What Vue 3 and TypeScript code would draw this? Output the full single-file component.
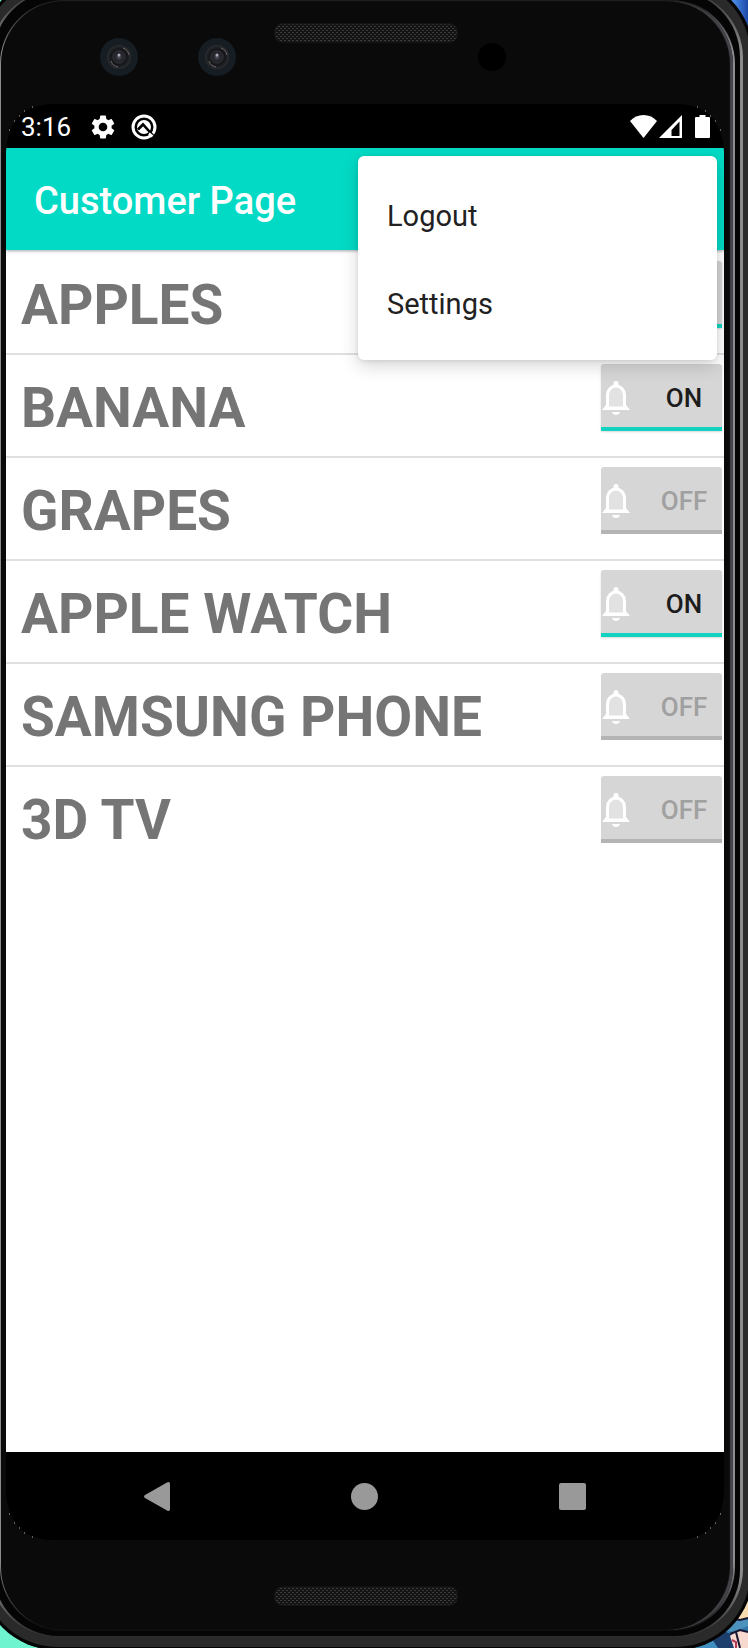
<script setup lang="ts">
import { ref } from 'vue'

interface Product {
  name: string
  notify: boolean
}

const products = ref<Product[]>([
  { name: 'APPLES', notify: true },
  { name: 'BANANA', notify: true },
  { name: 'GRAPES', notify: false },
  { name: 'APPLE WATCH', notify: true },
  { name: 'SAMSUNG PHONE', notify: false },
  { name: '3D TV', notify: false },
])

const menuItems: string[] = ['Logout', 'Settings']
const corners: string[] = ['tl', 'tr', 'bl', 'br']
</script>

<template>
  <div class="stage">
    <svg class="wallpaper" viewBox="0 0 60 60" aria-hidden="true">
      <rect width="60" height="60" fill="#2f74a8" />
      <path d="M0 44h24l6 8h16l6 8H0z" fill="#3f8fc0" />
      <path d="M26 30l12 4 12-4 10 2v6l-14 6-12-2z" fill="#4b93bd" />
      <path d="M22 48l12-6 8 4 4 14H30z" fill="#1c3f6e" />
      <path d="M46 10h14v20l-8 2-6-6z" fill="#f6dcae" />
      <path d="M42 48l8-6 10 2v16H46z" fill="#f7d9d0" />
      <path d="M40 30l12 2 8-2M42 46l10-4 8 2M48 44l4 16" stroke="#191631" stroke-width="2" fill="none" />
      <path d="M44 52l4 2v6" stroke="#b8385a" stroke-width="2" fill="none" />
    </svg>
    <div class="shell" aria-hidden="true">
      <div class="shell-edge">
        <div class="shell-gap">
          <div class="shell-line">
            <div class="shell-glass"></div>
          </div>
        </div>
      </div>
    </div>

    <div class="phone">
      <svg class="hardware" viewBox="0 0 748 104" aria-hidden="true">
        <defs>
          <pattern id="mesh" width="4" height="4" patternUnits="userSpaceOnUse">
            <rect width="4" height="4" fill="#131313" />
            <rect width="2" height="1" fill="#3c3c3c" />
            <rect x="2" y="2" width="2" height="1" fill="#3c3c3c" />
          </pattern>
          <radialGradient id="lens">
            <stop offset="0" stop-color="#5a5a66" />
            <stop offset=".25" stop-color="#2a2a31" />
            <stop offset=".65" stop-color="#15161a" />
            <stop offset="1" stop-color="#2b2d31" />
          </radialGradient>
        </defs>
        <rect x="275" y="24" width="182" height="18" rx="7" fill="url(#mesh)" stroke="#1c1c1c" />
        <g v-for="cx in [119, 217]" :key="cx">
          <circle :cx="cx" cy="57" r="19" fill="#161d23" />
          <circle :cx="cx" cy="57" r="12" fill="url(#lens)" />
          <path :d="`M${cx - 8} 61a9 9 0 0 0 7 6M${cx + 4} 48a9 9 0 0 1 6 7`" stroke="#6b6560" stroke-width="1" fill="none" />
          <circle :cx="cx" cy="57" r="6" fill="none" stroke="#34343a" />
          <circle :cx="cx" cy="55" r="1.5" fill="#a9a9b8" />
        </g>
        <circle cx="492" cy="57" r="14" fill="#000" />
      </svg>

      <div class="screen">
        <header class="status">
          <span class="time">3:16</span>
          <svg class="gear" viewBox="2 2 20 20" role="img" aria-label="Settings">
            <path fill="#fff" d="M19.14 12.94c.04-.3.06-.61.06-.94 0-.32-.02-.64-.07-.94l2.03-1.58a.49.49 0 0 0 .12-.61l-1.92-3.32a.49.49 0 0 0-.59-.22l-2.39.96c-.5-.38-1.03-.7-1.62-.94l-.36-2.54a.48.48 0 0 0-.48-.41h-3.84c-.24 0-.43.17-.47.41l-.36 2.54c-.59.24-1.13.57-1.62.94l-2.39-.96a.48.48 0 0 0-.59.22L2.74 8.87c-.12.21-.08.47.12.61l2.03 1.58c-.05.3-.09.63-.09.94s.02.64.07.94l-2.03 1.58a.49.49 0 0 0-.12.61l1.92 3.32c.12.22.37.29.59.22l2.39-.96c.5.38 1.03.7 1.62.94l.36 2.54c.05.24.24.41.48.41h3.84c.24 0 .44-.17.47-.41l.36-2.54c.59-.24 1.13-.56 1.62-.94l2.39.96c.22.08.47 0 .59-.22l1.92-3.32a.48.48 0 0 0-.12-.61zM12 15.6a3.6 3.6 0 1 1 0-7.2 3.6 3.6 0 0 1 0 7.2z" />
          </svg>
          <svg class="debug" viewBox="0 0 26 26" role="img" aria-label="System notification">
            <circle cx="13" cy="13" r="11" fill="none" stroke="#fff" stroke-width="3" />
            <circle cx="13" cy="13" r="7" fill="#fff" />
            <path d="M7 15.500l5-5 10 11" fill="none" stroke="#000" stroke-width="2.600" />
            <path d="M19 19l4.500 4.500" stroke="#000" stroke-width="2" />
            <path d="M18 19.500l3.500 3" stroke="#fff" stroke-width="2.500" />
          </svg>
          <div class="signals">
            <svg class="wifi" viewBox="0 0 27 23" role="img" aria-label="Wi-Fi">
              <path d="M0 6Q5.500 0 13.500 0T27 6L13.500 23z" fill="#fff" />
            </svg>
            <svg class="cell" viewBox="0 0 23 23" role="img" aria-label="Mobile signal">
              <path fill="#fff" fill-rule="evenodd" d="M0 23L23 0v23zM12.500 21h8V6.500l-8 8.500z" />
            </svg>
            <svg class="battery" viewBox="0 0 15 23" role="img" aria-label="Battery">
              <path fill="#fff" d="M4.500 0h6v2H14q1 0 1 1v19q0 1-1 1H1q-1 0-1-1V3q0-1 1-1h3.500z" />
            </svg>
          </div>
        </header>

        <div class="app">
          <div class="appbar">
            <h1>Customer Page</h1>
          </div>

          <ul class="products">
            <li v-for="p in products" :key="p.name">
              <span class="name">{{ p.name }}</span>
              <button
                type="button"
                class="toggle"
                :class="{ on: p.notify }"
                :aria-pressed="p.notify"
                :aria-label="`Notify about ${p.name}`"
                @click="p.notify = !p.notify"
              >
                <svg class="bell" viewBox="0 0 28 34" aria-hidden="true">
                  <path d="M5.500 27V14a8.500 9 0 0 1 17 0v13z" fill="#e2e2e2" stroke="#fff" stroke-width="3" />
                  <path d="M11.500 5V2.500a2.500 2.500 0 0 1 5 0V5zM0 29l4-5h3v2h14v-2h3l4 5zM10 31h8q-1 3-4 3t-4-3z" fill="#fff" />
                </svg>
                <span class="state">{{ p.notify ? 'ON' : 'OFF' }}</span>
              </button>
            </li>
          </ul>

          <div class="menu" role="menu">
            <button v-for="m in menuItems" :key="m" type="button" role="menuitem">{{ m }}</button>
          </div>
        </div>

        <nav class="navbar">
          <button type="button" aria-label="Back">
            <svg viewBox="0 0 29 29"><path d="M2 13Q0 14.500 2 16L24 28.500Q27 30 27 27V2Q27-1 24 .5z" fill="#999" /></svg>
          </button>
          <button type="button" aria-label="Home">
            <svg viewBox="0 0 29 29"><circle cx="14.500" cy="14.500" r="13.500" fill="#999" /></svg>
          </button>
          <button type="button" aria-label="Overview">
            <svg viewBox="0 0 29 29"><rect x="1" y="1" width="27" height="27" rx="2" fill="#999" /></svg>
          </button>
        </nav>

        <svg v-for="c in corners" :key="c" class="corner" :class="c" viewBox="0 0 48 48" aria-hidden="true">
          <path d="M0 0h48Q3 0 0 48z" fill="#0a0a0a" />
          <path d="M26 3h1M18 7h1M13 12h1M8 17h1M3 26h1" stroke="#b5b5b5" />
        </svg>
      </div>

      <svg class="hardware" viewBox="0 0 748 108" aria-hidden="true">
        <rect x="275" y="47" width="182" height="18" rx="7" fill="url(#mesh)" stroke="#1c1c1c" />
      </svg>
    </div>
  </div>
</template>

<style>
body {
  margin: 0;
}
</style>

<style scoped>
* {
  box-sizing: border-box;
}

.stage {
  position: relative;
  min-height: 100vh;
  overflow: hidden;
  font-family: Roboto, 'Liberation Sans', sans-serif;
  background: linear-gradient(to right, #6ef5d0 50%, #2456b8 50%, #2456b8 97%, #4b8ee8 98%, #1d48a8 100%);
}

.wallpaper {
  position: absolute;
  right: 0;
  bottom: 0;
  width: 60px;
  height: 60px;
}

/* The body of the device: outer case, polished edge, dark gap, thin line, front glass. */
.shell {
  position: absolute;
  inset: -23px -5px -2px -20px;
  padding: 13px 10px;
  border-radius: 77px;
  background: #2a2a2a;
  box-shadow: inset 0 0 0 3px #050505;
}

.shell-edge {
  height: 100%;
  padding: 1px 3px;
  border-radius: 68px;
  background: linear-gradient(#333, #8a8a8a 60px, #8a8a8a calc(100% - 60px), #2c2c2c);
}

.shell-gap {
  height: 100%;
  padding: 9px 5px 5px 7px;
  border-radius: 66px;
  background: #050505;
}

.shell-line {
  height: 100%;
  padding: 1px 2px 1px 1px;
  border-radius: 64px;
  background: linear-gradient(#1c1c1c, #8c8b90 50px, #8c8b90 calc(100% - 70px), #0c0c0c);
}

.shell-glass {
  height: 100%;
  border-radius: 63px;
  background: #0a0a0a;
  box-shadow: inset -3px 0 1px #45444a;
}

.phone {
  position: relative;
  display: flex;
  flex-direction: column;
  min-height: 100vh;
}

.hardware {
  display: block;
  width: 100%;
}

.screen {
  position: relative;
  flex: 1;
  display: flex;
  flex-direction: column;
  margin: 0 24px 0 6px;
  background: #000;
}

.status {
  display: flex;
  align-items: center;
  height: 44px;
  padding: 1px 14px 0 15px;
  color: #fff;
}

.time {
  font-size: 26px;
  line-height: 44px;
}

.gear {
  width: 24px;
  height: 24px;
  margin-left: 20px;
}

.debug {
  width: 26px;
  height: 26px;
  margin-left: 16px;
}

.signals {
  display: flex;
  gap: 2px;
  margin-left: auto;
}

.wifi {
  width: 27px;
  height: 23px;
}

.cell {
  width: 23px;
  height: 23px;
}

.battery {
  width: 15px;
  height: 23px;
  margin-left: 11px;
}

.app {
  position: relative;
  flex: 1;
  background: #fff;
}

.appbar {
  position: relative;
  display: flex;
  align-items: center;
  height: 102px;
  padding: 4px 28px 0;
  background: #03dac5;
  box-shadow: 0 1px 3px rgba(0, 0, 0, 0.35);
}

h1 {
  margin: 0;
  font-size: 38px;
  font-weight: 500;
  line-height: 48px;
  color: #fff;
}

.products {
  margin: 0;
  padding: 2px 0 0;
  list-style: none;
}

.products li {
  display: flex;
  align-items: flex-start;
  justify-content: space-between;
  height: 103px;
  padding: 9px 2px 0 15px;
  border-bottom: 2px solid #e0e0e0;
}

.products li:last-child {
  border-bottom: 0;
}

.name {
  font-size: 55px;
  font-weight: 700;
  line-height: 88px;
  color: #757575;
}

.toggle {
  display: flex;
  align-items: center;
  width: 121px;
  height: 67px;
  padding: 4px 0 0;
  border: 0;
  border-bottom: 4px solid #b4b4b4;
  border-radius: 3px 3px 0 0;
  background: #d6d6d6;
  font-family: inherit;
  font-size: 26px;
  font-weight: 500;
  color: #a0a0a0;
}

.toggle.on {
  border-bottom-color: #14d2c0;
  color: #1c1c1c;
  box-shadow: 0 1px 2px rgba(0, 0, 0, 0.15);
}

.bell {
  width: 28px;
  height: 34px;
  margin-left: 1px;
}

.state {
  flex: 1;
  padding-left: 16px;
  text-align: center;
}

.menu {
  position: absolute;
  top: 8px;
  right: 7px;
  width: 50%;
  padding: 14px 0;
  border-radius: 6px;
  background: #fff;
  box-shadow: 0 6px 18px rgba(0, 0, 0, 0.16), 0 1px 4px rgba(0, 0, 0, 0.1);
}

.menu button {
  display: block;
  width: 100%;
  height: 88px;
  padding: 3px 29px 0;
  border: 0;
  background: none;
  font-family: inherit;
  font-size: 29px;
  text-align: left;
  color: #212121;
}

.navbar {
  display: grid;
  grid-template-columns: repeat(3, 1fr);
  height: 88px;
  padding: 0 48px;
}

.navbar button {
  display: grid;
  place-items: center;
  padding: 0;
  border: 0;
  background: none;
}

.navbar svg {
  width: 29px;
  height: 29px;
}

.corner {
  position: absolute;
  width: 48px;
  height: 48px;
  pointer-events: none;
}

.tl {
  top: 0;
  left: 0;
}

.tr {
  top: 0;
  right: 0;
  transform: scaleX(-1);
}

.bl {
  bottom: 0;
  left: 0;
  transform: scaleY(-1);
}

.br {
  right: 0;
  bottom: 0;
  transform: scale(-1);
}
</style>
